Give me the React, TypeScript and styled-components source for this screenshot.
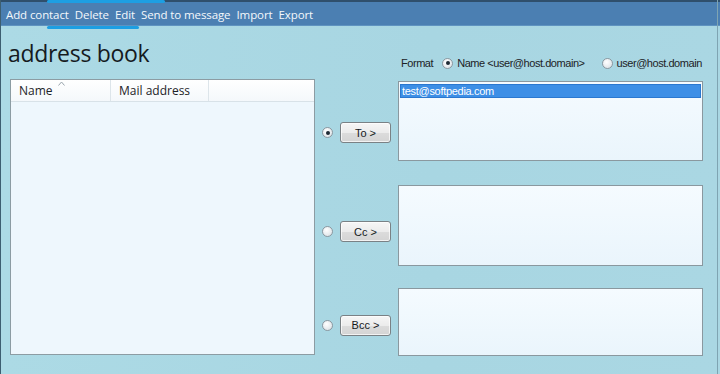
import React from 'react';
import styled, { createGlobalStyle } from 'styled-components';

const GlobalStyle = createGlobalStyle`
  html, body {
    margin: 0;
    padding: 0;
    background: #a9d7e3;
  }
`;

// Окно приложения
const Window = styled.div`
  position: relative;
  width: 720px;
  height: 374px;
  box-sizing: border-box;
  overflow: hidden;
  background: linear-gradient(90deg, #acdae5 0%, #a8d6e2 60%, #aad7e3 100%);
  border-left: 1px solid #3d5e70;
  font-family: 'Liberation Sans', Arial, sans-serif;
`;

const RightEdge = styled.div`
  position: absolute;
  top: 0;
  bottom: 0;
  left: 716px;
  width: 1px;
  background: #7fa4b2;
`;

const MenuBar = styled.div`
  display: flex;
  align-items: center;
  gap: 6px;
  height: 26px;
  box-sizing: border-box;
  padding: 1px 0 0 5px;
  background: #4b7fb2;
  border-top: 2px solid #2f4f6c;
  border-bottom: 1px solid #5f93c0;
`;

const MenuItem = styled.span`
  font-family: 'Open Sans', 'Noto Sans', sans-serif;
  font-size: 11.5px;
  color: #f4f8fc;
  letter-spacing: -0.1px;
`;

// Маркерные пометки поверх меню
const Marker = styled.div<{ $x: number; $y: number; $w: number }>`
  position: absolute;
  left: ${p => p.$x}px;
  top: ${p => p.$y}px;
  width: ${p => p.$w}px;
  height: 3px;
  border-radius: 2px;
  background: #1d9fe3;
`;

const Body = styled.div`
  display: flex;
  padding-left: 9px;
`;

const LeftPane = styled.div`
  display: flex;
  flex-direction: column;
  width: 305px;
`;

const Title = styled.h1`
  margin: 12px 0 0 -2px;
  font-family: 'Open Sans', 'Noto Sans', sans-serif;
  font-weight: 400;
  font-size: 23px;
  line-height: 30px;
  color: #151a1e;
  letter-spacing: -0.3px;
`;

const ListView = styled.div`
  margin-top: 11px;
  height: 276px;
  box-sizing: border-box;
  border: 1px solid #8c9ca3;
  background: #eef7fd;
  display: flex;
  flex-direction: column;
`;

const HeaderRow = styled.div`
  display: flex;
  height: 22px;
  box-sizing: border-box;
  background: linear-gradient(#ffffff, #f4f8fb);
  border-bottom: 1px solid #d8e2e8;
`;

const HeaderCell = styled.div<{ $w?: number }>`
  position: relative;
  display: flex;
  align-items: center;
  ${p => (p.$w ? `width: ${p.$w}px;` : 'flex: 1;')}
  box-sizing: border-box;
  padding-left: 8px;
  border-right: 1px solid #dde5ea;
  font-family: 'Open Sans', 'Noto Sans', sans-serif;
  font-size: 12px;
  color: #1d2328;
  &:last-child {
    border-right: none;
  }
`;

const SortArrow = styled.svg`
  position: absolute;
  left: 47px;
  top: 1px;
`;

const RightPane = styled.div`
  display: flex;
  flex-direction: column;
  margin-left: 8px;
  width: 380px;
`;

const FormatRow = styled.div`
  display: flex;
  align-items: center;
  height: 14px;
  margin: 30px 0 0 78px;
  font-size: 11px;
  letter-spacing: -0.45px;
  color: #1c2226;
`;

const FormatLabel = styled.span`
  margin-right: 9px;
`;

const RadioOption = styled.label`
  display: flex;
  align-items: center;
  gap: 4px;
  margin-right: 17px;
  white-space: nowrap;
  &:last-child {
    margin-right: 0;
  }
`;

const Radio = styled.span<{ $checked?: boolean }>`
  display: inline-flex;
  align-items: center;
  justify-content: center;
  width: 9px;
  height: 9px;
  border-radius: 50%;
  border: 1px solid #8c98a0;
  background: radial-gradient(circle at 40% 35%, #ffffff, #d6dde2);
  flex-shrink: 0;
  &::after {
    content: '';
    display: ${p => (p.$checked ? 'block' : 'none')};
    width: 4px;
    height: 4px;
    border-radius: 50%;
    background: #1e2a34;
  }
`;

const AddrRow = styled.div<{ $h: number; $mt: number }>`
  display: flex;
  align-items: center;
  height: ${p => p.$h}px;
  margin-top: ${p => p.$mt}px;
`;

const RowControls = styled.div<{ $shift: number }>`
  display: flex;
  align-items: center;
  gap: 7px;
  width: 76px;
  margin-left: -1px;
  margin-top: ${p => p.$shift}px;
  box-sizing: border-box;
`;

const ArrowButton = styled.button`
  width: 51px;
  height: 21px;
  padding: 0;
  border: 1px solid #7a8185;
  border-radius: 3px;
  background: linear-gradient(#f6f6f6 0%, #ececec 50%, #dcdcdc 51%, #d4d4d4 100%);
  font-family: 'Liberation Sans', Arial, sans-serif;
  font-size: 11px;
  color: #15191c;
  box-shadow: inset 0 0 0 1px rgba(255, 255, 255, 0.7);
`;

const AddrBox = styled.div`
  flex: 1;
  align-self: stretch;
  box-sizing: border-box;
  border: 1px solid #8a989f;
  background: linear-gradient(#f5fbff, #eaf5fc);
  padding: 2px 1px;
`;

const AddrItem = styled.div<{ $selected?: boolean }>`
  height: 12px;
  line-height: 12px;
  padding-left: 1px;
  font-size: 11px;
  letter-spacing: -0.3px;
  color: ${p => (p.$selected ? '#ffffff' : '#1c2226')};
  background: ${p => (p.$selected ? '#3d8fe6' : 'transparent')};
  border: 1px solid ${p => (p.$selected ? '#2a78d0' : 'transparent')};
`;

const menu = ['Add contact', 'Delete', 'Edit', 'Send to message', 'Import', 'Export'];

const rows = [
  { label: 'To >', h: 80, mt: 11, shift: 23, checked: true, items: ['test@softpedia.com'] },
  { label: 'Cc >', h: 81, mt: 24, shift: 12, checked: false, items: [] as string[] },
  { label: 'Bcc >', h: 68, mt: 22, shift: 6, checked: false, items: [] as string[] },
];

export default function App() {
  return (
    <>
      <GlobalStyle />
      <Window>
        <MenuBar>
          {menu.map(m => (
            <MenuItem key={m}>{m}</MenuItem>
          ))}
        </MenuBar>
        <Marker $x={46} $y={0} $w={118} />
        <Marker $x={46} $y={26} $w={92} />

        <Body>
          <LeftPane>
            <Title>address book</Title>
            <ListView>
              <HeaderRow>
                <HeaderCell $w={100}>
                  Name
                  <SortArrow width="7" height="5" viewBox="0 0 7 5">
                    <path d="M0.5 4.5 L3.5 1 L6.5 4.5" fill="none" stroke="#9aa6ae" strokeWidth="1" />
                  </SortArrow>
                </HeaderCell>
                <HeaderCell $w={98}>Mail address</HeaderCell>
                <HeaderCell />
              </HeaderRow>
            </ListView>
          </LeftPane>

          <RightPane>
            <FormatRow>
              <FormatLabel>Format</FormatLabel>
              <RadioOption>
                <Radio $checked />
                Name &lt;user@host.domain&gt;
              </RadioOption>
              <RadioOption>
                <Radio />
                user@host.domain
              </RadioOption>
            </FormatRow>

            {rows.map(r => (
              <AddrRow key={r.label} $h={r.h} $mt={r.mt}>
                <RowControls $shift={r.shift}>
                  <Radio $checked={r.checked} />
                  <ArrowButton>{r.label}</ArrowButton>
                </RowControls>
                <AddrBox>
                  {r.items.map(it => (
                    <AddrItem key={it} $selected>
                      {it}
                    </AddrItem>
                  ))}
                </AddrBox>
              </AddrRow>
            ))}
          </RightPane>
        </Body>
        <RightEdge />
      </Window>
    </>
  );
}
